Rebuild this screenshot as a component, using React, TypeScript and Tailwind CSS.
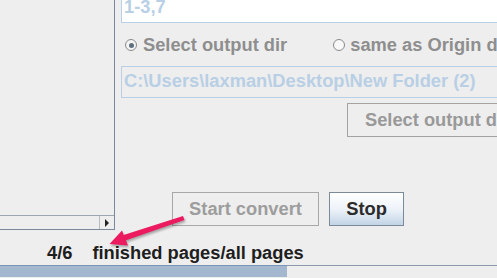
export default function App() {
  return (
    <div className="relative w-[497px] h-[278px] overflow-hidden bg-[#eeeeee] font-['Liberation_Sans',Arial,sans-serif] font-bold text-[18.3px] leading-[18px]">
      <div className="flex h-[230px]">
        {/* left list panel with horizontal scrollbar */}
        <div className="w-[115px] shrink-0 border-r border-b border-[#7a8a99] flex flex-col justify-end">
          <div className="h-[14px] border-t border-[#9ba6b1] flex justify-end">
            <div className="w-[15px] h-full border-l border-[#b4bcc4] flex items-center justify-center">
              <div className="w-0 h-0 border-y-[4px] border-y-transparent border-l-[4px] border-l-[#222222]" />
            </div>
          </div>
        </div>

        {/* right settings column */}
        <div className="w-[420px] shrink-0 pl-[6px] flex flex-col">
          <div className="w-[420px] h-[23px] border-x border-b border-[#b8cfe5] bg-white pl-[2px]">
            <div className="-mt-[2px] text-[#b8cfe5]">1-3,7</div>
          </div>

          <div className="mt-[13px] h-[18px] flex items-center text-[#8e8e8e] whitespace-nowrap">
            <div className="ml-[4px] w-[12px] h-[12px] rounded-full border border-[#8a8a8a] bg-[#f4f4f4] flex items-center justify-center">
              <div className="w-[5px] h-[5px] rounded-full bg-[#5f6f80]" />
            </div>
            <span className="ml-[6px]">Select output dir</span>
            <div className="ml-[46px] w-[12px] h-[12px] rounded-full border border-[#8a8a8a] bg-[#f8f8f8]" />
            <span className="ml-[5px]">same as Origin dir</span>
          </div>

          <div className="mt-[12px] w-[420px] h-[32px] border border-[#b8cfe5] bg-[#eeeeee] pl-[2px] pt-[5px] text-[#b8cfe5] whitespace-nowrap">
            C:\Users\laxman\Desktop\New Folder (2)
          </div>

          <div className="mt-[5px] ml-[226px] w-[200px] h-[34px] border border-[#a3a3a3] flex items-center pl-[17px] text-[#999999] whitespace-nowrap">
            Select output dir
          </div>

          <div className="mt-[55px] ml-[51px] flex gap-[10px]">
            <div className="w-[147px] h-[34px] border border-[#a8a8a8] flex items-center justify-center text-[#9d9d9d]">
              Start convert
            </div>
            <div className="w-[75px] h-[34px] border border-[#7a8a99] bg-gradient-to-b from-white via-[#eef3f9] to-[#c3d4e6] flex items-center justify-center text-[#2b2b2b]">
              Stop
            </div>
          </div>
        </div>
      </div>

      {/* status line */}
      <div className="pt-[14px] flex text-[#1e1e1e] whitespace-nowrap">
        <span className="ml-[47px]">4/6</span>
        <span className="ml-[20px]">finished pages/all pages</span>
      </div>

      {/* progress bar */}
      <div className="mt-[3px] h-[13px] border-t border-[#8a9aab] bg-[#eeeeee]">
        <div className="w-[287px] h-full bg-[#a3b8cf] border-t border-[#7b94b8] -mt-px" />
      </div>

      {/* annotation arrow */}
      <svg className="absolute inset-0 pointer-events-none drop-shadow-[1px_2px_1px_rgba(0,0,0,0.3)]" width="497" height="278" viewBox="0 0 497 278">
        <polygon points="183,216 184.5,220 124,241 122,235.5" fill="#ec1a5e" />
        <polygon points="109.5,244 122,230.5 128,245.5" fill="#ec1a5e" />
      </svg>
    </div>
  )
}
